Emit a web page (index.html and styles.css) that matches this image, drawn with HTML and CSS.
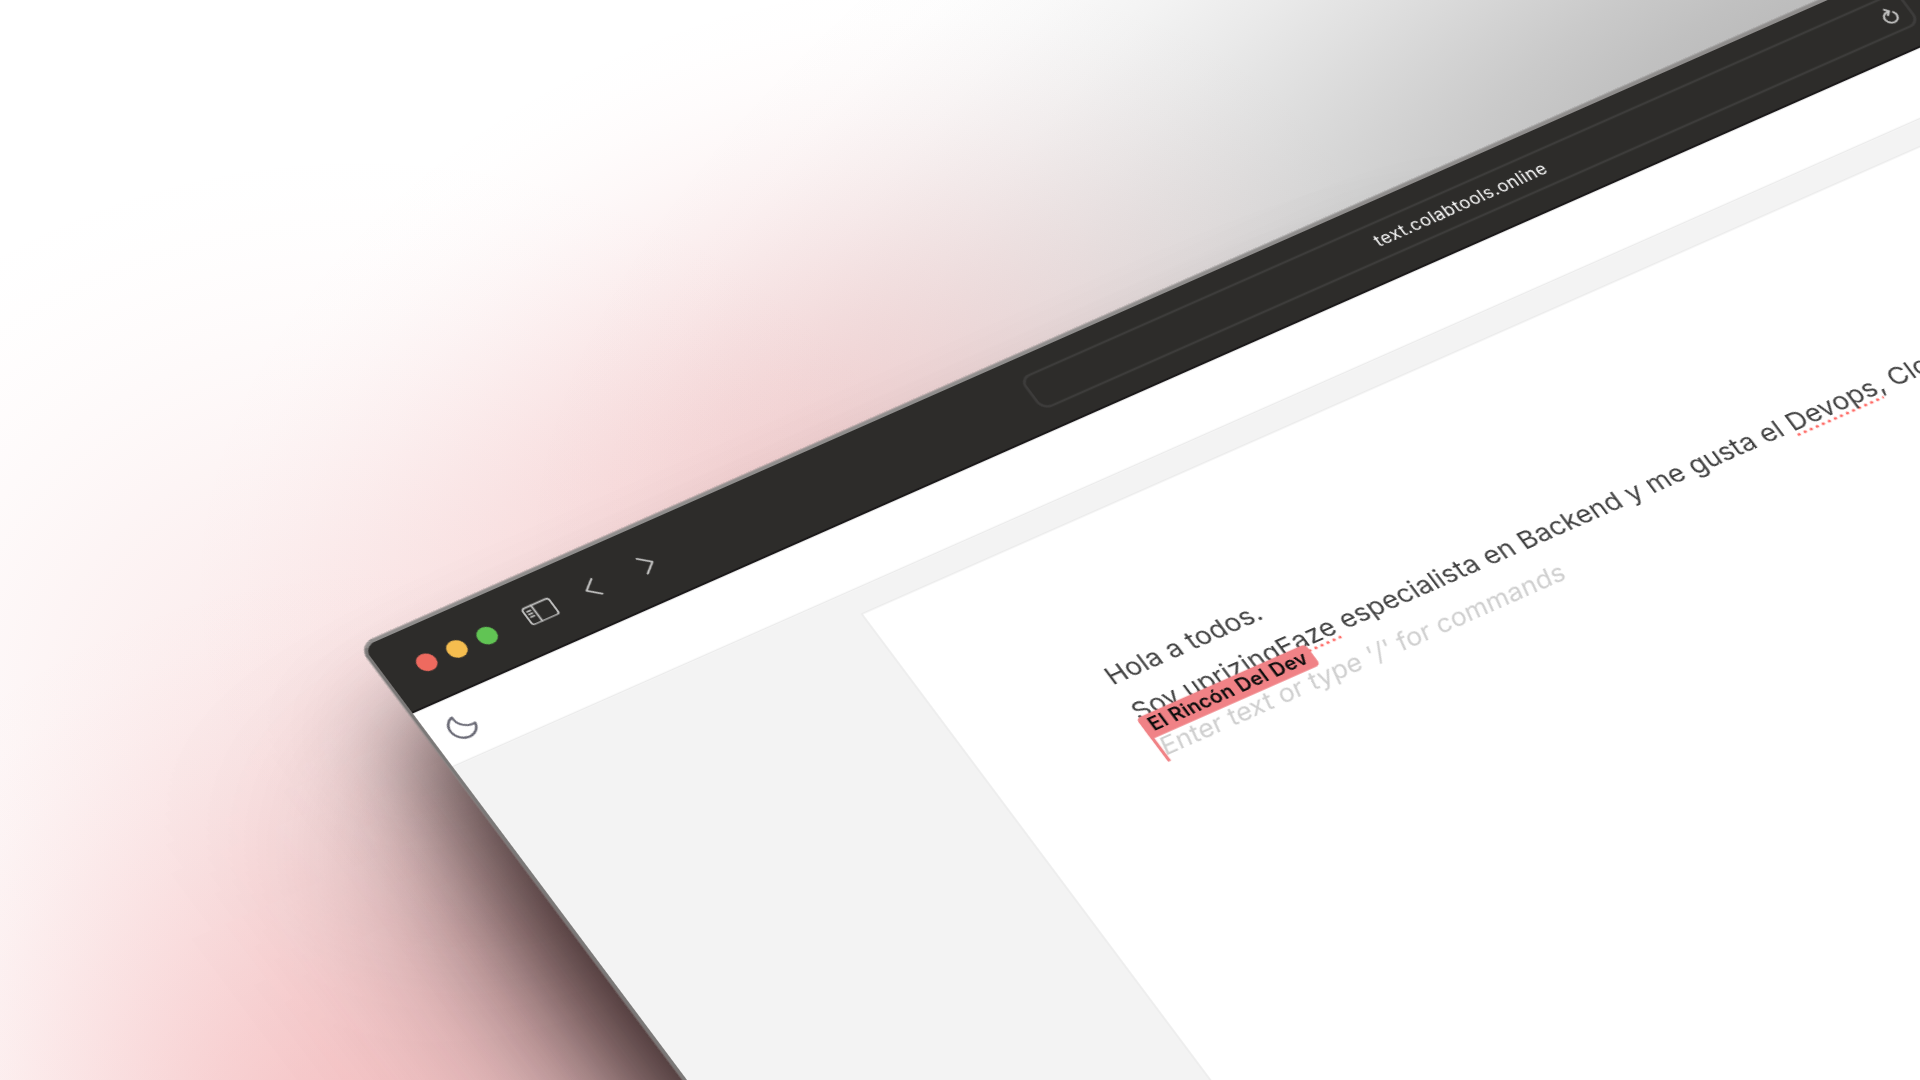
FILE: index.html
```html
<!DOCTYPE html>
<html lang="es">
<head>
<meta charset="utf-8">
<title>text.colabtools.online</title>
<link rel="stylesheet" href="styles.css">
</head>
<body>
<main class="stage">
  <div class="glow gray"></div>
  <div class="glow rose"></div>
  <div class="glow haze"></div>
  <div class="glow coral"></div>
  <div class="shade wide"></div>
  <div class="shade tight"></div>
  <section class="window">
    <header class="titlebar">
      <div class="lights"><i class="light red"></i><i class="light yellow"></i><i class="light green"></i></div>
      <svg class="sidebar-icon" viewBox="0 0 19 13.4"><rect x=".7" y=".7" width="17.6" height="12" rx="1.8"/><path d="M7 .7v12M2.7 3.5h2.2M2.7 5.5h2.2M2.7 7.5h2.2"/></svg>
      <svg class="chevron back" viewBox="0 0 9 13"><path d="M8 .8 1.2 6.5 8 12.2"/></svg>
      <svg class="chevron" viewBox="0 0 9 13"><path d="M1 .8 7.8 6.5 1 12.2"/></svg>
      <div class="address">
        <span class="url">text.colabtools.online</span>
        <svg class="reload" viewBox="0 0 12 14"><path d="M9.7 5.2A4.6 4.6 0 1 1 6 3.4h1.2M5.2.9l2.4 2.5-2.4 2.4"/></svg>
      </div>
    </header>
    <nav class="toolbar">
      <svg class="moon" viewBox="0 0 24 24"><path d="M10 2.6A10.2 10.2 0 0 0 22.3 13.6 9.9 9.9 0 1 1 10 2.6Z"/></svg>
    </nav>
    <div class="workspace">
      <article class="sheet">
        <p class="line first">Hola a todos.</p>
        <p class="line second">Soy <span class="typo">uprizingEaze</span> especialista en Backend y me gusta el <span class="typo">Devops</span>, Clo</p>
        <p class="line placeholder"><span class="hint">Enter text or type '/' for commands</span><span class="caret"><b class="tag">El Rincón Del Dev</b></span></p>
      </article>
    </div>
  </section>
</main>
</body>
</html>
```
FILE: styles.css
```css
* { box-sizing: border-box; }
body { margin: 0; background: #fff; font-family: Inter, "Liberation Sans", sans-serif; }
p { margin: 0; }
.stage { position: relative; width: 1920px; height: 1080px; overflow: hidden; }
.glow {
  position: absolute;
  background: radial-gradient(closest-side,
    currentColor,
    color-mix(in srgb, currentColor 96%, transparent) 10%,
    color-mix(in srgb, currentColor 86%, transparent) 20%,
    color-mix(in srgb, currentColor 73%, transparent) 30%,
    color-mix(in srgb, currentColor 58%, transparent) 40%,
    color-mix(in srgb, currentColor 43%, transparent) 50%,
    color-mix(in srgb, currentColor 29%, transparent) 60%,
    color-mix(in srgb, currentColor 17%, transparent) 70%,
    color-mix(in srgb, currentColor 8%, transparent) 80%,
    color-mix(in srgb, currentColor 2%, transparent) 90%,
    transparent);
}
.gray { left: 400px; top: -540px; width: 2900px; height: 1240px; transform: rotate(-24deg); color: #404040; opacity: .38; }
.rose { left: 150px; top: 0; width: 1300px; height: 940px; transform: rotate(-24deg); color: #dc5f62; opacity: .25; }
.haze { left: -320px; top: 130px; width: 1360px; height: 1160px; color: #e68284; opacity: .17; }
.coral { left: -260px; top: 560px; width: 1300px; height: 1200px; color: #e6666a; opacity: .38; }
.shade {
  position: absolute; left: 0; top: 0; width: 700px; height: 800px;
  transform-origin: 0 0; will-change: transform;
}
.tight { background: rgba(15,5,5,.74); filter: blur(35px); transform: matrix(1.51, -.667, .98, 1.31, 358, 645.6) translate(-9px, 64px); }
.wide { background: rgba(48,14,16,.7); filter: blur(64px); transform: matrix(1.51, -.667, .98, 1.31, 358, 645.6) translate(-42px, 126px); }
.window {
  display: flex; flex-direction: column;
  position: relative; width: 1500px; height: 900px;
  border: 2px solid #8f8d8c; border-left-color: #7a7877; border-radius: 10px;
  transform-origin: 0 0;
  transform: matrix(1.51, -.667, .98, 1.31, 358, 645.6);
  background: linear-gradient(#2d2c2a 50px, #f3f3f3 50px);
  box-shadow: 0 0 0 .5px #8a8887;
}
.titlebar {
  display: flex; align-items: center; flex: none; height: 51px;
  padding: 0 0 2px 19.7px; background: #2d2c2a; box-shadow: inset 0 -1.4px #1b191a; border-radius: 8px 8px 0 0;
}
.lights { display: flex; gap: 8px; }
.light { width: 12px; height: 12px; border-radius: 50%; }
.red { background: #ee6a5f; }
.yellow { background: #f5bd4f; }
.green { background: #61c454; }
svg { fill: none; stroke: #c4c4c3; stroke-width: 1.2; stroke-linecap: round; stroke-linejoin: round; flex: none; }
.sidebar-icon { width: 19px; height: 13.4px; margin-left: 20.3px; stroke-width: 1.15; }
.chevron { width: 9px; height: 13px; margin-left: 28px; }
.chevron.back { margin-left: 20px; }
.address {
  display: flex; align-items: center; flex: none; width: 582px; height: 24.5px; margin-left: 249.3px;
  padding: 0 8.3px 0 228.5px; box-shadow: inset 0 0 0 1.7px #3d3c3b; border-radius: 7px;
}
.url { flex: 1; color: #fff; font-size: 10.5px; letter-spacing: .31px; white-space: nowrap; }
.reload { width: 10px; height: 12px; stroke-width: 1.5; }
.toolbar { display: flex; align-items: center; flex: none; height: 41px; padding: 0 0 3px 10.2px; background: #fff; box-shadow: inset 0 -1px #ebebeb; }
.moon { width: 19px; height: 19px; stroke: #6b6b76; stroke-width: 1.8; }
.workspace { flex: 1; padding: 15px 0 0 260px; background: #f3f3f3; }
.sheet { height: 100%; padding: 86.4px 0 0 99px; background: #fff; box-shadow: inset 1px 1px #ebebeb; }
.line { height: 26.8px; line-height: 26.8px; font-size: 16px; letter-spacing: .09px; color: #424242; white-space: nowrap; }
.typo { background: radial-gradient(circle at 2px 1.2px, #ff6b66 .9px, transparent 1.2px) 0 100% / 4px 2.6px repeat-x; }
.placeholder { position: relative; color: #cfcfcf; }
.hint { display: inline-block; margin-left: 1px; letter-spacing: .06px; transform: skewX(-12deg); }
.caret { position: absolute; left: -1.4px; top: -1.4px; width: 2px; height: 24px; background: #f08286; }
.tag {
  position: absolute; left: 0; top: -8.3px; padding: 0 4.4px 0 4.8px; height: 15.3px; line-height: 15.3px;
  border-radius: 3px 3px 3px 0; background: #f08286; color: #0d0d0d; font-size: 12px; font-weight: 600; letter-spacing: .15px;
}
```
